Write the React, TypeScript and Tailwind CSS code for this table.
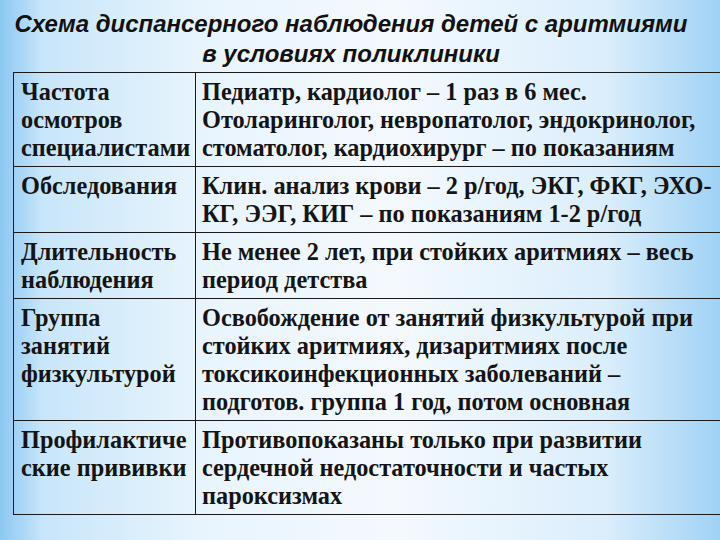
const rows: { label: string[]; text: string[] }[] = [
  {
    label: ["Частота", "осмотров", "специалистами"],
    text: [
      "Педиатр, кардиолог – 1 раз в 6 мес.",
      "Отоларинголог, невропатолог, эндокринолог,",
      "стоматолог, кардиохирург – по показаниям",
    ],
  },
  {
    label: ["Обследования"],
    text: [
      "Клин. анализ крови – 2 р/год, ЭКГ, ФКГ, ЭХО-",
      "КГ, ЭЭГ, КИГ – по показаниям 1-2 р/год",
    ],
  },
  {
    label: ["Длительность", "наблюдения"],
    text: ["Не менее 2 лет, при стойких аритмиях – весь", "период детства"],
  },
  {
    label: ["Группа", "занятий", "физкультурой"],
    text: [
      "Освобождение от занятий физкультурой при",
      "стойких аритмиях, дизаритмиях после",
      "токсикоинфекционных заболеваний –",
      "подготов. группа 1 год, потом основная",
    ],
  },
  {
    label: ["Профилактиче", "ские прививки"],
    text: [
      "Противопоказаны только при развитии",
      "сердечной недостаточности и частых",
      "пароксизмах",
    ],
  },
];

function Lines({ lines }: { lines: string[] }) {
  return (
    <>
      {lines.map((l) => (
        <div key={l} className="whitespace-nowrap">
          {l}
        </div>
      ))}
    </>
  );
}

export default function App() {
  return (
    <div className="relative h-[540px] w-[720px] overflow-hidden bg-[linear-gradient(to_right,#8cc7f2_0%,#c8e6fa_6%,#e8f4fd_28%,#f4f9fe_55%,#dbeefc_84%,#a0d2f5_100%)]">
      <div className="pr-[18px] pt-[9px] text-center font-[family-name:Liberation_Sans,Arial,sans-serif] text-[24px] font-bold italic leading-[30px] text-[#111]">
        <div className="whitespace-nowrap">Схема диспансерного наблюдения детей с аритмиями</div>
        <div>в условиях поликлиники</div>
      </div>

      <div className="ml-[13px] mt-[3px] w-[760px] border-l border-t border-[#1a1a1a] font-[family-name:Liberation_Serif,Times_New_Roman,serif] text-[24.3px] font-bold leading-[28px] text-[#141414]">
        {rows.map((r) => (
          <div key={r.label[0]} className="grid grid-cols-[182px_1fr] border-b border-[#1a1a1a]">
            <div className="border-r border-[#1a1a1a] pb-[4px] pl-[7px] pt-[5px]">
              <Lines lines={r.label} />
            </div>
            <div className="pb-[4px] pl-[6px] pt-[5px]">
              <Lines lines={r.text} />
            </div>
          </div>
        ))}
      </div>
    </div>
  );
}
